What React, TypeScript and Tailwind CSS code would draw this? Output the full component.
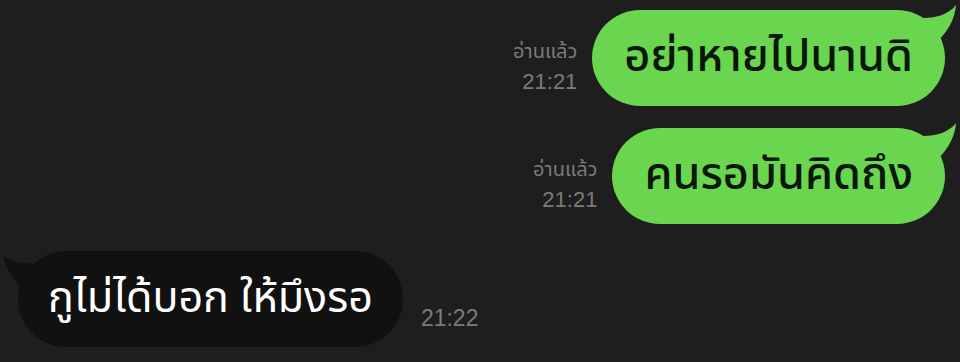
import React from 'react'

const TailRight = ({ color }: { color: string }) => (
  <svg className="absolute -right-[14px] -top-[6px]" width="36" height="40" viewBox="0 0 36 40">
    <path d="M0 14 C14 14 26 10 33 1 C32 14 26 26 14 38 L0 38 Z" fill={color} />
  </svg>
)

const TailLeft = ({ color }: { color: string }) => (
  <svg className="absolute -left-[16px] top-[2px]" width="40" height="40" viewBox="0 0 40 40">
    <path d="M40 10 C26 12 12 10 1 3 C4 16 12 28 22 38 L40 38 Z" fill={color} />
  </svg>
)

const ReadLabel = ({ time }: { time: string }) => (
  <div className="mb-[10px] flex flex-col items-end text-[#7b7b7b]">
    <span className="text-[20px] leading-[29px]">อ่านแล้ว</span>
    <span className="font-['Liberation_Sans',sans-serif] text-[22px] leading-[29px]">{time}</span>
  </div>
)

export default function App() {
  const outgoing = [
    { text: 'อย่าหายไปนานดิ', time: '21:21' },
    { text: 'คนรอมันคิดถึง', time: '21:21' },
  ]

  return (
    <div className="flex h-[362px] w-[960px] flex-col overflow-hidden bg-[#1e1e1e] pt-[10px] font-['Noto_Sans_Thai','Noto_Sans',sans-serif]">
      {/* outgoing messages */}
      <div className="flex flex-col gap-[22px] pr-[15px]">
        {outgoing.map((m, i) => (
          <div key={i} className="flex items-end justify-end gap-[15px]">
            <ReadLabel time={m.time} />
            <div className="relative flex h-[96px] items-center rounded-[48px] bg-[#6ad650] px-[32px]">
              <TailRight color="#6ad650" />
              <span className="relative text-[45px] font-medium text-[#0a1608]">{m.text}</span>
            </div>
          </div>
        ))}
      </div>

      {/* incoming message */}
      <div className="mt-[27px] flex items-end gap-[18px] pl-[18px]">
        <div className="relative flex h-[96px] items-center rounded-[48px] bg-[#111111] px-[30px]">
          <TailLeft color="#111111" />
          <span className="relative text-[43px] text-white">กูไม่ได้บอก ให้มึงรอ</span>
        </div>
        <span className="mb-[12px] font-['Liberation_Sans',sans-serif] text-[23px] text-[#7b7b7b]">21:22</span>
      </div>
    </div>
  )
}
